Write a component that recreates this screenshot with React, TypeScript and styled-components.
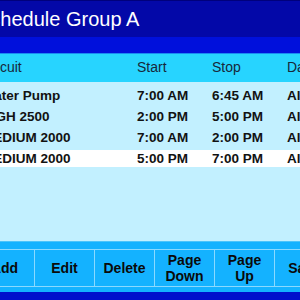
import React from "react";
import styled, { createGlobalStyle } from "styled-components";

const GlobalStyle = createGlobalStyle`
  html, body {
    margin: 0;
    padding: 0;
    background: #c2f0ff;
  }
  body {
    font-family: "Liberation Sans", Arial, sans-serif;
  }
`;

const schedules = [
  { circuit: "Water Pump", start: "7:00 AM", stop: "6:45 AM", days: "All", selected: false },
  { circuit: "HIGH 2500", start: "2:00 PM", stop: "5:00 PM", days: "All", selected: false },
  { circuit: "MEDIUM 2000", start: "7:00 AM", stop: "2:00 PM", days: "All", selected: false },
  { circuit: "MEDIUM 2000", start: "5:00 PM", stop: "7:00 PM", days: "All", selected: true },
];

const buttons = ["Add", "Edit", "Delete", "Page\nDown", "Page\nUp", "Save"];

const Viewport = styled.div`
  width: 300px;
  height: 300px;
  overflow: hidden;
`;

const Screen = styled.div`
  width: 380px;
  height: 300px;
  margin-left: -24px;
  display: flex;
  flex-direction: column;
  background: #c2f0ff;
`;

const TitleBar = styled.header`
  height: 36px;
  border-top: 1px solid #00007c;
  background: #0308a8;
  display: flex;
  align-items: center;
  padding-left: 1px;
  color: #ffffff;
  font-size: 20px;
`;

const SubBar = styled.div`
  height: 16px;
  background: #0010dc;
  border-bottom: 1px solid #1a8cf2;
`;

const Grid = styled.div`
  display: grid;
  grid-template-columns: 155px 75px 75px 70px;
  padding-left: 6px;
`;

const HeaderRow = styled(Grid)`
  height: 28px;
  align-items: center;
  padding-bottom: 2px;
  box-sizing: border-box;
  background: #27d4ff;
  color: #17283a;
  font-size: 14px;
`;

const Body = styled.div`
  flex: 1;
  display: flex;
  flex-direction: column;
  gap: 4px;
  padding-top: 5px;
`;

const Row = styled(Grid)<{ $selected: boolean }>`
  height: 17px;
  align-items: center;
  background: ${({ $selected }) => ($selected ? "#ffffff" : "transparent")};
  color: #121212;
  font-size: 13.5px;
  font-weight: bold;
  white-space: nowrap;
`;

const ButtonStrip = styled.div`
  height: 51px;
  box-sizing: border-box;
  padding: 7px 0 6px;
  margin-left: -1px;
  background: #14b2ff;
  border-top: 1px solid #4cc4fb;
  display: flex;
`;

const ActionButton = styled.button`
  flex: 0 0 60px;
  height: 38px;
  box-sizing: border-box;
  border: none;
  border-top: 1px solid #8ad9ff;
  border-bottom: 1px solid #8ad9ff;
  border-right: 1px solid #8ad9ff;
  background: #14b2ff;
  padding: 0;
  font-family: "Liberation Sans", Arial, sans-serif;
  font-size: 14px;
  font-weight: bold;
  line-height: 16px;
  color: #0a0a0a;
  white-space: pre-line;
`;

const BottomBar = styled.div`
  height: 8px;
  background: #0010cc;
`;

export default function App() {
  return (
    <>
      <GlobalStyle />
      <Viewport>
        <Screen>
          <TitleBar>Schedule Group A</TitleBar>
          <SubBar />
          <HeaderRow>
            <span>Circuit</span>
            <span>Start</span>
            <span>Stop</span>
            <span>Days</span>
          </HeaderRow>
          <Body>
            {schedules.map((s, i) => (
              <Row key={i} $selected={s.selected}>
                <span>{s.circuit}</span>
                <span>{s.start}</span>
                <span>{s.stop}</span>
                <span>{s.days}</span>
              </Row>
            ))}
          </Body>
          <ButtonStrip>
            {buttons.map((b) => (
              <ActionButton key={b}>{b}</ActionButton>
            ))}
          </ButtonStrip>
          <BottomBar />
        </Screen>
      </Viewport>
    </>
  );
}
